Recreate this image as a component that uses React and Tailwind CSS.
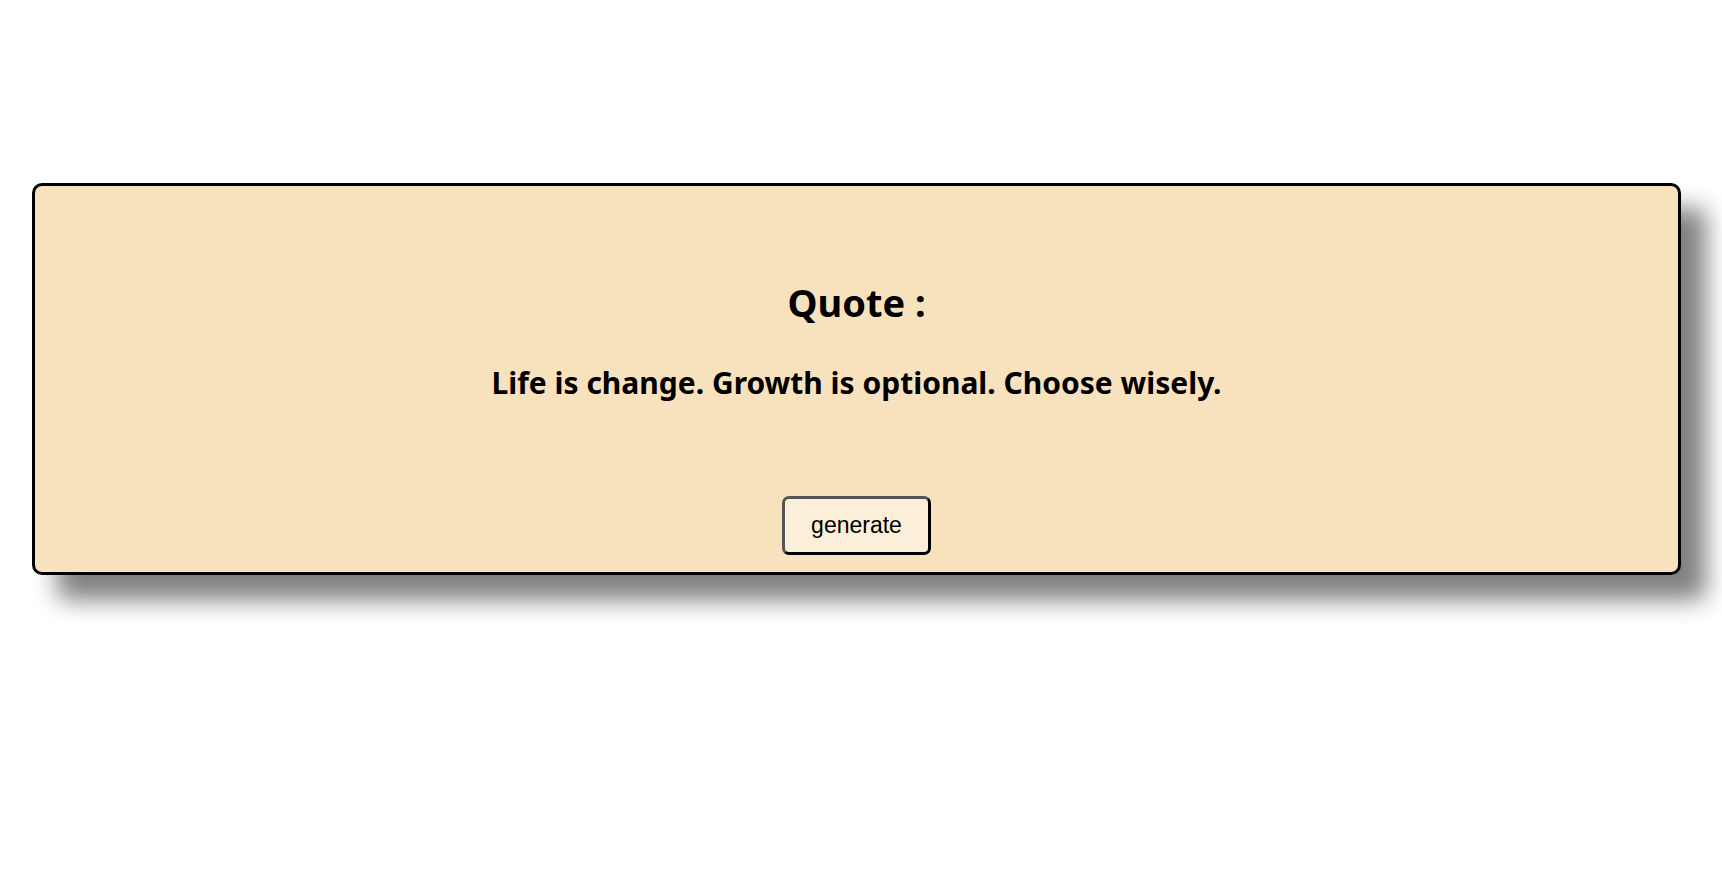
export default function App() {
  return (
    <div className="w-[1722px] h-[878px] bg-white pt-[183px] pl-[32px]" style={{ fontFamily: '"Noto Sans", sans-serif' }}>
      <div className="w-[1649px] h-[392px] bg-[#f8e2be] border-[3px] border-black rounded-[10px] shadow-[25px_25px_25px_#808080] flex flex-col items-center">
        <h2 className="mt-[94px] text-[38px] leading-[44px] font-bold text-black">Quote :</h2>
        <p className="mt-[39px] text-[30px] leading-[40px] font-bold text-black">Life is change. Growth is optional. Choose wisely.</p>
        <button className="mt-[93px] w-[149px] h-[59px] bg-[#fcefd9] border-[3px] border-t-[#555] border-l-[#555] border-r-black border-b-black rounded-[7px] text-[23px] text-black" style={{ fontFamily: '"Liberation Sans", Arial, sans-serif' }}>generate</button>
      </div>
    </div>
  );
}
